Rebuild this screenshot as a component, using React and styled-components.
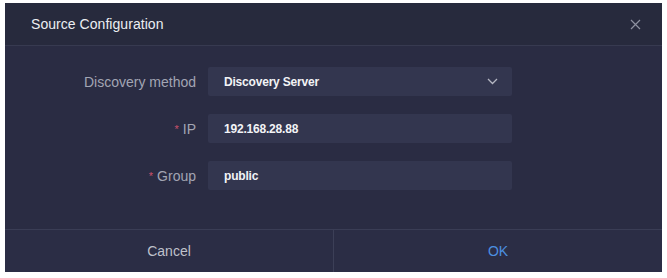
import React from "react";
import styled, { createGlobalStyle } from "styled-components";

const Global = createGlobalStyle`
  html, body { margin: 0; padding: 0; background: #ffffff; }
  body { font-family: "Liberation Sans", Arial, sans-serif; }
  #root { width: 667px; height: 278px; }
`;

const Page = styled.div`
  width: 667px;
  height: 278px;
  padding: 3px 5px 6px 5px;
  box-sizing: border-box;
`;

const Dialog = styled.div`
  width: 657px;
  height: 269px;
  background: #2a2c43;
  display: flex;
  flex-direction: column;
`;

const Header = styled.div`
  height: 42px;
  flex: none;
  display: flex;
  align-items: center;
  justify-content: space-between;
  padding: 0 20px 0 26px;
  background: #272a3d;
  border-bottom: 1px solid #373a50;
`;

const Title = styled.div`
  color: #eceef2;
  font-size: 14px;
  letter-spacing: 0.05px;
  margin-top: -1px;
`;

const Close = styled.button`
  background: none;
  border: none;
  padding: 0;
  width: 14px;
  height: 14px;
  display: flex;
  align-items: center;
  justify-content: center;
`;

const Body = styled.div`
  flex: 1;
  display: flex;
  flex-direction: column;
  gap: 18px;
  padding: 21px 0 0 0;
`;

const Row = styled.div`
  display: grid;
  grid-template-columns: 191px 304px;
  column-gap: 12px;
  align-items: center;
  height: 29px;
`;

const Label = styled.div`
  text-align: right;
  color: #a2a5b3;
  font-size: 14px;
`;

const Star = styled.span`
  color: #c9506b;
  font-size: 11px;
  margin-right: 4px;
  vertical-align: 1px;
`;

const Field = styled.div`
  height: 29px;
  background: #33364f;
  border-radius: 2px;
  display: flex;
  align-items: center;
  justify-content: space-between;
  padding: 0 14px 0 16px;
  color: #f2f3f6;
  font-size: 12px;
  font-weight: bold;
  letter-spacing: -0.2px;
`;

const Footer = styled.div`
  height: 42px;
  flex: none;
  display: grid;
  grid-template-columns: 328px 1fr;
  border-top: 1px solid #3a3d55;
  background: #2b2d45;
`;

const FootButton = styled.button`
  background: none;
  border: none;
  border-left: ${(p) => (p.$divider ? "1px solid #3c3f57" : "none")};
  color: ${(p) => (p.$primary ? "#4c8fe0" : "#bfc1cb")};
  font-family: "Liberation Sans", Arial, sans-serif;
  font-size: 14px;
  display: flex;
  align-items: center;
  justify-content: center;
`;

export default function App() {
  return (
    <Page>
      <Global />
      <Dialog>
        <Header>
          <Title>Source Configuration</Title>
          <Close>
            <svg width="11" height="11" viewBox="0 0 11 11">
              <path d="M1 1L10 10M10 1L1 10" stroke="#8d90a0" strokeWidth="1.2" />
            </svg>
          </Close>
        </Header>
        <Body>
          <Row>
            <Label>Discovery method</Label>
            <Field>
              <span>Discovery Server</span>
              <svg width="11" height="7" viewBox="0 0 11 7">
                <path d="M1 1L5.5 5.5L10 1" stroke="#b4b6c2" strokeWidth="1.3" fill="none" />
              </svg>
            </Field>
          </Row>
          <Row>
            <Label><Star>*</Star>IP</Label>
            <Field>192.168.28.88</Field>
          </Row>
          <Row>
            <Label><Star>*</Star>Group</Label>
            <Field>public</Field>
          </Row>
        </Body>
        <Footer>
          <FootButton>Cancel</FootButton>
          <FootButton $divider $primary>OK</FootButton>
        </Footer>
      </Dialog>
    </Page>
  );
}
